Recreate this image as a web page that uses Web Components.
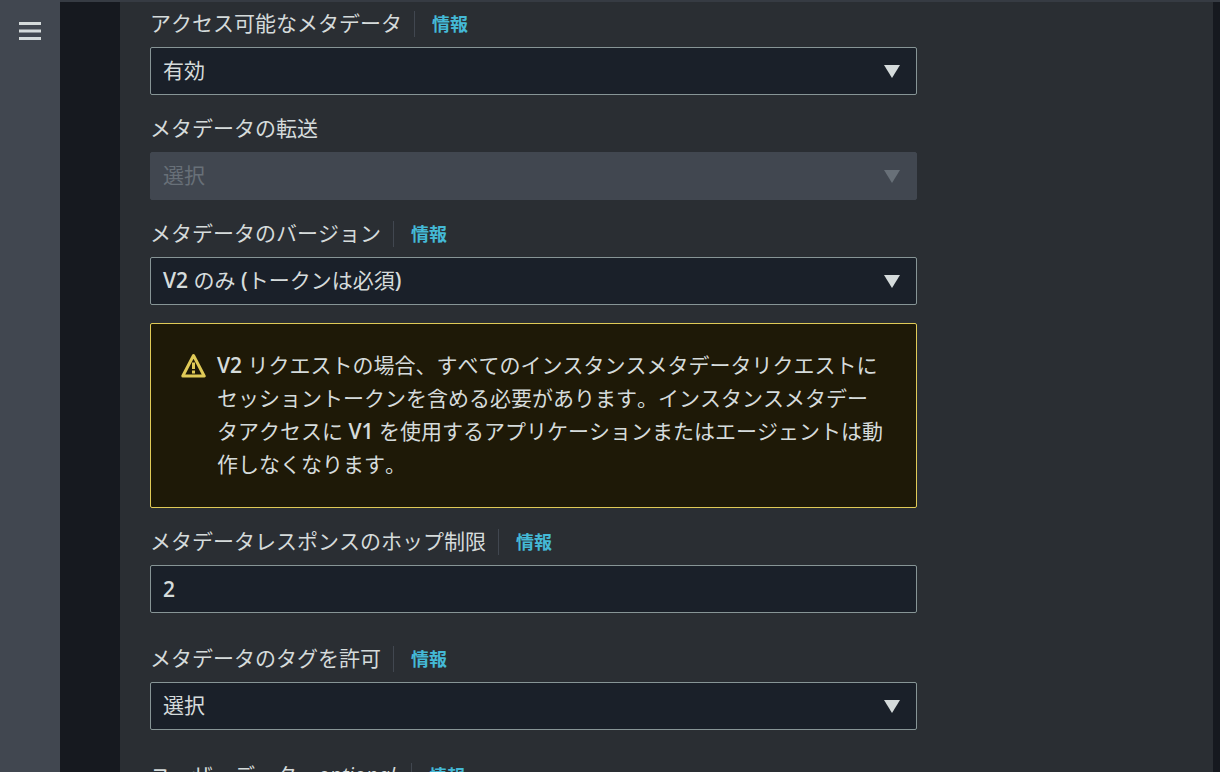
<!DOCTYPE html>
<html lang="ja">
<head>
<meta charset="utf-8">
<style>
  html, body { margin: 0; height: 100%; overflow: hidden; background: #16191f; }
  body { font-family: "Open Sans", "Noto Sans CJK JP", sans-serif; font-kerning: none; }
  b { font-weight: 600; }
</style>
</head>
<body>
<console-shell>
  <form-field label="アクセス可能なメタデータ" info>
    <select-box value="有効"></select-box>
  </form-field>
  <form-field label="メタデータの転送">
    <select-box value="選択" disabled></select-box>
  </form-field>
  <form-field label="メタデータのバージョン" info>
    <select-box value="V2 のみ (トークンは必須)"></select-box>
  </form-field>
  <warn-box>
    <b>V2</b> リクエストの場合、すべてのインスタンスメタデータリクエストにセッショントークンを含める必要があります。インスタンスメタデータアクセスに <b>V1</b> を使用するアプリケーションまたはエージェントは動作しなくなります。
  </warn-box>
  <form-field label="メタデータレスポンスのホップ制限" info>
    <text-box value="2"></text-box>
  </form-field>
  <form-field label="メタデータのタグを許可" info class="spaced">
    <select-box value="選択"></select-box>
  </form-field>
  <form-field label="ユーザーデータ" note="optional" info class="spaced"></form-field>
</console-shell>

<script>
const FONT = '"Open Sans", "Noto Sans CJK JP", sans-serif';

// latin runs are heavier than the kana next to them
const latinBold = s => s.replace(/[A-Za-z0-9()]+/g, m => `<b>${m}</b>`);

class ConsoleShell extends HTMLElement {
    constructor() {
        super();
        this.attachShadow({ mode: 'open' });
    }
    connectedCallback() {
        this.shadowRoot.innerHTML = `
        <style>
            :host { display: flex; height: 772px; overflow: hidden; background: #16191f; font-family: ${FONT}; font-kerning: none; }
            .rail { width: 60px; flex: none; background: #414750; display: flex; justify-content: center; padding-top: 22px; box-sizing: border-box; }
            .rail svg { display: block; }
            .gutter { width: 60px; flex: none; background: #16191f; border-top: 2px solid #363b43; box-sizing: border-box; }
            .panel { width: 1093px; flex: none; background: #2a2e33; border-top: 2px solid #363b43; padding: 9px 30px 0; box-sizing: border-box; }
            .edge { flex: 1; border-top: 2px solid #363b43; }
            .col { width: 767px; }
        </style>
        <div class="rail">
            <svg width="22" height="18" viewBox="0 0 22 18"><path d="M0 1.5h22M0 9h22M0 16.5h22" stroke="#d5dbdb" stroke-width="3"/></svg>
        </div>
        <div class="gutter"></div>
        <div class="panel"><div class="col"><slot></slot></div></div>
        <div class="edge"></div>
        `;
    }
}

class FormField extends HTMLElement {
    constructor() {
        super();
        this.attachShadow({ mode: 'open' });
    }
    connectedCallback() {
        const info = this.hasAttribute('info');
        const note = this.getAttribute('note');
        this.shadowRoot.innerHTML = `
        <style>
            :host { display: block; margin-bottom: 21px; }
            :host(.spaced) { margin-top: 33px; }
            .head { display: flex; align-items: center; height: 26px; margin-bottom: 10px; font-size: 21px; color: #d5dbdb; white-space: nowrap; }
            .text { margin-top: -4px; }
            i { margin: 0 4px 0 3px; }
            .info { margin-left: 12px; padding-left: 17px; border-left: 1px solid #414750; height: 26px; line-height: 26px; font-size: 18px; font-weight: 700; color: #44b9d6; }
        </style>
        <div class="head"><span class="text">${this.getAttribute('label')}${note ? ` - <i>${note}</i>` : ''}</span>${info ? '<span class="info">情報</span>' : ''}</div>
        <slot></slot>
        `;
    }
}

class SelectBox extends HTMLElement {
    constructor() {
        super();
        this.attachShadow({ mode: 'open' });
    }
    connectedCallback() {
        this.shadowRoot.innerHTML = `
        <style>
            :host { display: flex; align-items: center; justify-content: space-between; height: 48px; box-sizing: border-box; padding: 0 16px 0 12px; background: #1a2029; border: 1px solid #879596; border-radius: 2px; color: #d5dbdb; font-size: 21px; }
            :host([disabled]) { background: #414750; border-color: #414750; color: #687078; }
            .text { margin-top: -4px; }
            b { font-weight: 600; }
            svg { display: block; fill: currentColor; }
        </style>
        <span class="text">${latinBold(this.getAttribute('value'))}</span>
        <svg width="16" height="13" viewBox="0 0 16 13"><path d="M0 0h16L8 13z"/></svg>
        `;
    }
}

class TextBox extends HTMLElement {
    constructor() {
        super();
        this.attachShadow({ mode: 'open' });
    }
    connectedCallback() {
        this.shadowRoot.innerHTML = `
        <style>
            :host { display: flex; align-items: center; height: 48px; box-sizing: border-box; padding: 0 12px; background: #1a2029; border: 1px solid #879596; border-radius: 2px; color: #d5dbdb; font-size: 21px; font-weight: 600; }
        </style>
        <span>${this.getAttribute('value')}</span>
        `;
    }
}

class WarnBox extends HTMLElement {
    constructor() {
        super();
        this.attachShadow({ mode: 'open' });
    }
    connectedCallback() {
        this.shadowRoot.innerHTML = `
        <style>
            :host { display: flex; box-sizing: border-box; height: 185px; margin: -3px 0 21px; padding: 25px 30px 0 30px; background: #1e1907; border: 1px solid #e0ca57; border-radius: 2px; color: #d5dbdb; font-size: 21px; line-height: 33px; }
            svg { flex: none; margin: 4px 11px 0 0; display: block; }
        </style>
        <svg width="25" height="26" viewBox="0 0 25 26">
            <path d="M12.5 2.5 L23.2 23 H1.8 Z" fill="none" stroke="#e0ca57" stroke-width="3" stroke-linejoin="round"/>
            <path d="M12.5 9.5v6.5M12.5 17.5v3" stroke="#e0ca57" stroke-width="3"/>
        </svg>
        <div><slot></slot></div>
        `;
    }
}

customElements.define('console-shell', ConsoleShell);
customElements.define('form-field', FormField);
customElements.define('select-box', SelectBox);
customElements.define('text-box', TextBox);
customElements.define('warn-box', WarnBox);
</script>
</body>
</html>
